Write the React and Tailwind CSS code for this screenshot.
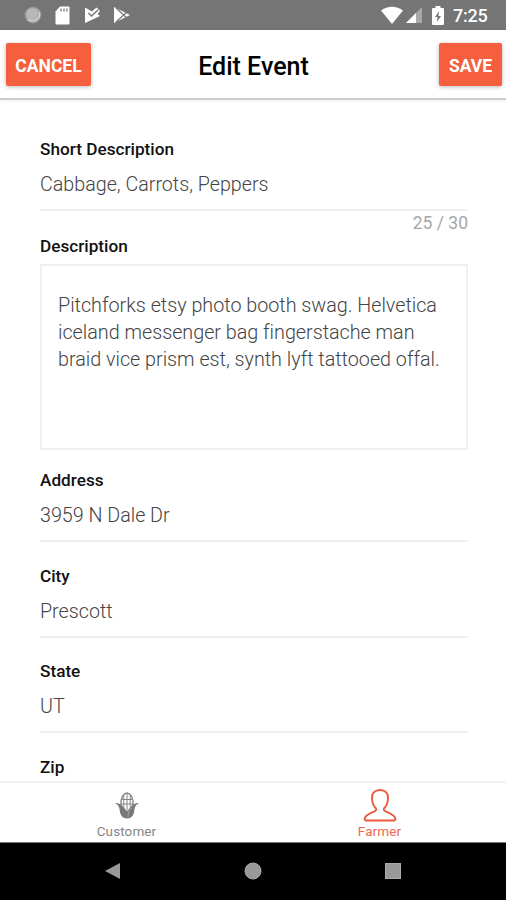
import React from "react";

function StatusBar() {
  return (
    <div className="flex h-[30px] shrink-0 items-center justify-between bg-[#757575] pl-6 pr-[18px] text-white">
      <div className="flex items-center">
        <svg width="18" height="18" viewBox="0 0 18 18">
          <circle cx="9" cy="9" r="8" fill="#a9a9a9" stroke="#929292" />
          <path d="M4 13.5A7.3 7.3 0 0 0 15.5 6" fill="none" stroke="#d5d5d5" strokeWidth="1.3" />
          <circle cx="8.4" cy="8.4" r="5.8" fill="#b7b7b7" />
        </svg>
        <svg className="ml-[13px]" width="15" height="19" viewBox="0 0 15 19">
          <path d="M5 .5h8.5q1 0 1 1v16q0 1-1 1H1.500q-1 0-1-1V5.500Z" fill="#fff" />
          <path d="M6 2.500v3M9 2.500v3M12 2.500v3" stroke="#777" strokeWidth="1.300" />
        </svg>
        <svg className="ml-[14px]" width="17" height="18" viewBox="0 0 17 18">
          <path d="M1 1.500 8 5.500 12.500 1.500 16 5 13.500 8l2.500 2L1 17Z" fill="#fff" />
          <path d="m4.500 7 3 3L14 4" fill="none" stroke="#757575" strokeWidth="1.500" />
        </svg>
        <svg className="ml-[12px]" width="18" height="18" viewBox="0 0 18 18">
          <path d="M1 1 17 9 1 17Z" fill="#fff" />
          <path d="m3 2 11 10M3 16 14 6" stroke="#777" strokeWidth="1.200" />
        </svg>
      </div>
      <div className="flex items-center">
        <svg width="22" height="18" viewBox="0 0 22 18">
          <path d="M0 4.500Q11-3 22 4.500L11 18Z" fill="#fff" />
        </svg>
        <svg className="ml-[2px]" width="18" height="18" viewBox="0 0 18 18">
          <path d="M17 1v16H1Z" fill="#a9a9a9" />
          <path d="M11 7v10H1Z" fill="#fff" />
        </svg>
        <svg className="ml-[9px]" width="12" height="19" viewBox="0 0 12 19">
          <path d="M3.500 2V0h5v2H11q1 0 1 1v15q0 1-1 1H1q-1 0-1-1V3q0-1 1-1Z" fill="#fff" />
          <path d="M7.200 5 3 11h2.600L5 16l4-6H6.400Z" fill="#757575" />
        </svg>
        <span className="ml-[9px] w-[35px] whitespace-nowrap pt-[2px] text-[18px] font-medium leading-5 tracking-[-0.2px]">7:25</span>
      </div>
    </div>
  );
}

function Header() {
  return (
    <header className="flex h-[70px] shrink-0 items-start justify-between border-b-2 border-[#cbcccc] pl-[6px] pr-1 pt-[13px] shadow-[0_1px_2px_rgba(0,0,0,0.06)]">
      <button className="h-[43px] w-[85px] rounded-[2px] bg-[#f55f3e] pt-[3px] text-[17.5px] font-bold text-white shadow-[0_1px_4px_rgba(0,0,0,0.28)]">CANCEL</button>
      <h1 className="-ml-[23px] pt-[8px] text-[25px] font-medium leading-8 text-black">Edit Event</h1>
      <button className="h-[43px] w-[63px] rounded-[2px] bg-[#f55f3e] pt-[3px] text-[17.5px] font-bold text-white shadow-[0_1px_4px_rgba(0,0,0,0.28)]">SAVE</button>
    </header>
  );
}

function Label({ children }) {
  return <div className="text-[17.2px] font-medium leading-[18px] text-[#111]">{children}</div>;
}

function Value({ children }) {
  return (
    <div className="flex h-[53px] items-center border-b-2 border-[#efefef] pt-[3px] text-[19.7px] font-light leading-6 text-[#444]">
      {children}
    </div>
  );
}

function Field({ label, value }) {
  return (
    <div className="h-[95.5px] shrink-0">
      <Label>{label}</Label>
      <Value>{value}</Value>
    </div>
  );
}

function Tabs() {
  return (
    <nav className="flex h-[61px] shrink-0 border-t-2 border-[#f2f2f2] bg-white">
      <div className="flex flex-1 flex-col items-center pt-[9px] text-[13.5px] leading-4 text-[#858585]">
        <svg width="26" height="28" viewBox="0 0 26 28">
          <path d="M7 15V9Q8 2 13 1q5 1 6 8v6" fill="#fff" stroke="#888" strokeWidth="1.400" />
          <path d="M13 1v17M9.800 4v13M16.200 4v13M8 7.500h10M7 12h12" stroke="#858585" strokeWidth="1" />
          <path d="M1 11q6 0 9 5l3 3 3-3q3-5 9-5-4 2-4.500 6-.5 9.500-7.500 9.500T5.500 17Q5 13 1 11Z" fill="#777" />
          <path d="M18 16q-4 2-4 9" fill="none" stroke="#aaa" />
        </svg>
        <span className="mt-[3px] tracking-[0.1px]">Customer</span>
      </div>
      <div className="flex flex-1 flex-col items-center pt-[5px] text-[13.5px] leading-4 text-[#f16650]">
        <svg width="34" height="34" viewBox="0 0 34 34" fill="none" stroke="#eb593e" strokeWidth="1.900" strokeLinejoin="round">
          <path d="M17 2C11.500 2 8.500 5.500 9 10.500 9.200 15 10.500 18 13 20.500c1 2-1.500 3-4.500 4.200C4.500 26.500 1.800 28 1.500 31q0 1.500 1.500 1.500h28q1.500 0 1.500-1.500c-.3-3-3-4.500-7-6.300-3-1.200-5.500-2.200-4.500-4.200 2.500-2.500 3.800-5.500 4-10C25.500 5.500 22.500 2 17 2Z" />
        </svg>
        <span className="mt-px tracking-[0.1px]">Farmer</span>
      </div>
    </nav>
  );
}

function SystemBar() {
  return (
    <div className="flex h-[58px] shrink-0 items-center justify-between border-t border-[#777] bg-black pb-px pl-[104px] pr-[105px]">
      <svg width="17" height="18" viewBox="0 0 17 18"><path d="M16 1v16L1 9Z" fill="#999" /></svg>
      <svg width="18" height="18" viewBox="0 0 18 18"><circle cx="9" cy="9" r="8" fill="#999" stroke="#aaa" /></svg>
      <div className="h-4 w-4 border border-[#aaa] bg-[#999]" />
    </div>
  );
}

export default function App() {
  return (
    <div className="flex h-[900px] w-[506px] flex-col overflow-hidden bg-white font-['Roboto',sans-serif]">
      <StatusBar />
      <Header />
      <main className="flex min-h-0 flex-1 flex-col overflow-hidden pl-10 pr-[38px] pt-[40px]">
        <div className="h-[96.5px] shrink-0">
          <Label>Short Description</Label>
          <Value>Cabbage, Carrots, Peppers</Value>
          <div className="text-right text-[17.5px] leading-6 text-[#a5a8a8]">25 / 30</div>
        </div>
        <div className="h-[234.5px] shrink-0">
          <Label>Description</Label>
          <div className="mt-[9.5px] h-[186px] whitespace-pre border-2 border-[#f0f0f0] pl-4 pt-[26px] text-[19.75px] font-light leading-[27px] tracking-[-0.01px] text-[#444]">{"Pitchforks etsy photo booth swag. Helvetica\niceland messenger bag fingerstache man\nbraid vice prism est, synth lyft tattooed offal."}</div>
        </div>
        <Field label="Address" value="3959 N Dale Dr" />
        <Field label="City" value="Prescott" />
        <Field label="State" value="UT" />
        <Label>Zip</Label>
      </main>
      <Tabs />
      <SystemBar />
    </div>
  );
}
